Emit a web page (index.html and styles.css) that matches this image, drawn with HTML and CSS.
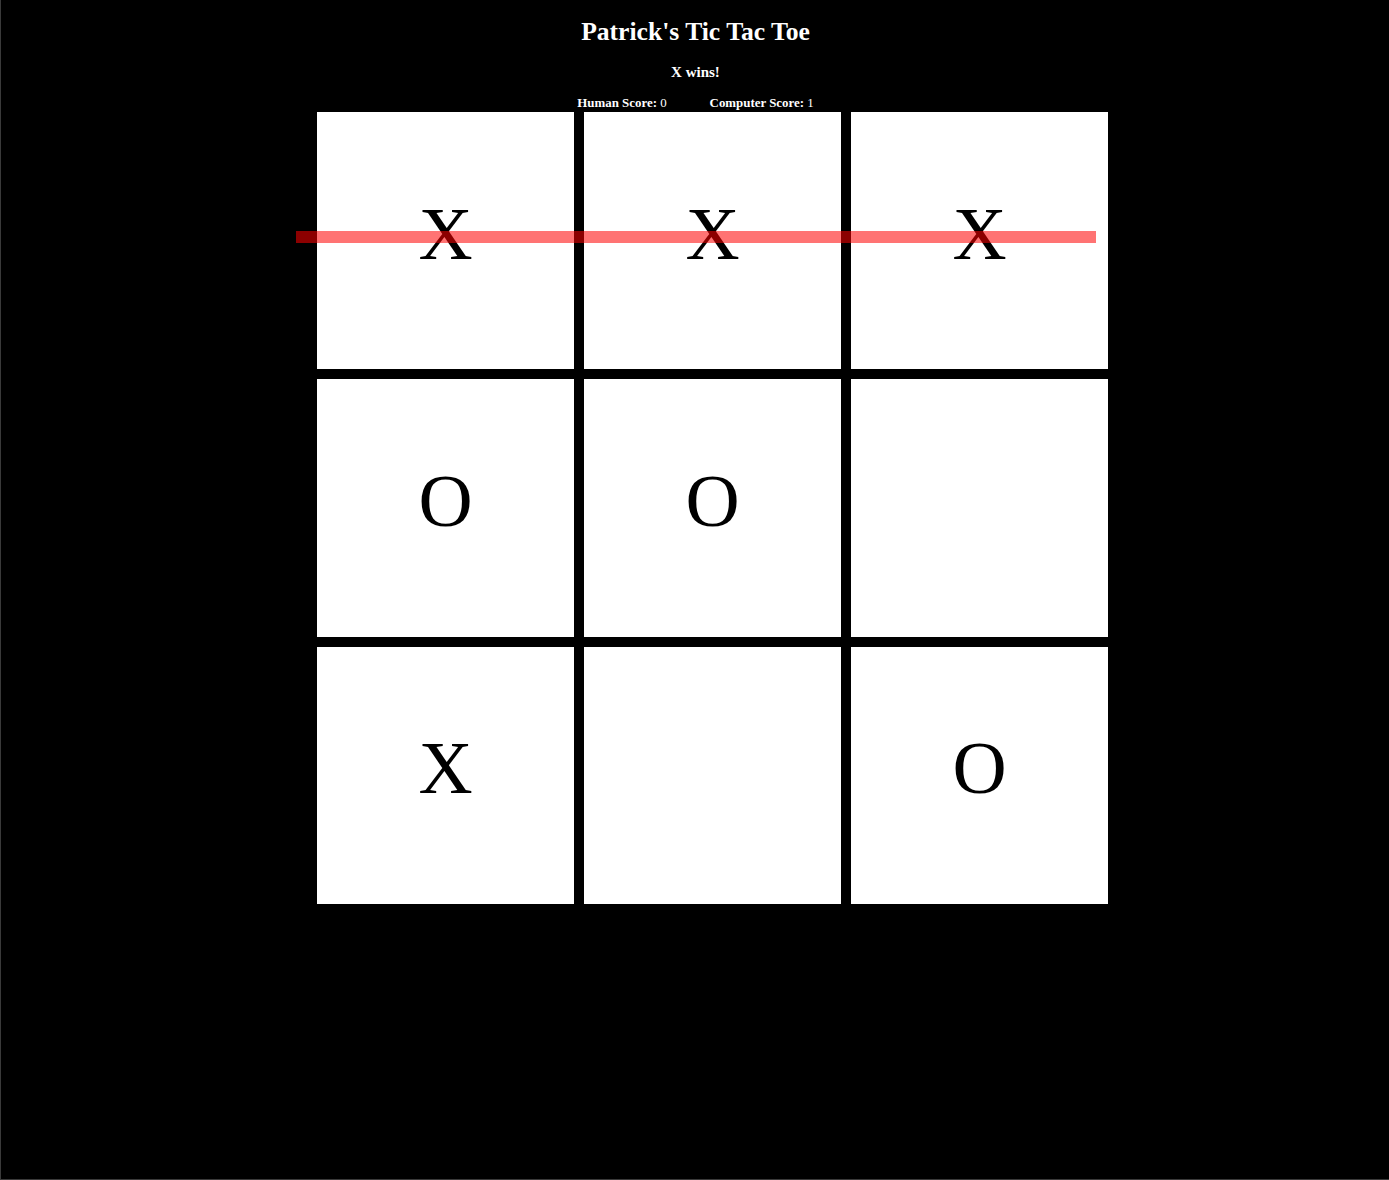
FILE: index.html
```html
<!DOCTYPE html>
<html lang="en">
<head>
<meta charset="utf-8">
<title>Patrick's Tic Tac Toe</title>
<link rel="stylesheet" href="styles.css">
</head>
<body>
<div class="page">
  <header class="header">
    <h1 class="title">Patrick's Tic Tac Toe</h1>
    <p class="status">X wins!</p>
    <div class="scores">
      <span class="score"><b>Human Score:</b> 0</span>
      <span class="score"><b>Computer Score:</b> 1</span>
    </div>
  </header>
  <div class="board">
    <div class="cell">X</div>
    <div class="cell">X</div>
    <div class="cell">X</div>
    <div class="cell">O</div>
    <div class="cell">O</div>
    <div class="cell"></div>
    <div class="cell">X</div>
    <div class="cell"></div>
    <div class="cell">O</div>
    <div class="win-line"></div>
  </div>
</div>
</body>
</html>
```

FILE: styles.css
```css
html, body {
  margin: 0;
  padding: 0;
  background: #000;
}

body {
  font-family: "Liberation Serif", "Times New Roman", serif;
  color: #fff;
  min-height: 100vh;
  box-sizing: border-box;
  border-left: 1px solid #3a3a3a;
  border-bottom: 1px solid #3a3a3a;
}

.page {
  display: flex;
  flex-direction: column;
}

.header {
  display: flex;
  flex-direction: column;
  align-items: center;
  padding-top: 17px;
  padding-left: 1px;
}

.title {
  margin: 0;
  font-size: 25.6px;
  line-height: 30px;
  font-weight: bold;
}

.status {
  margin: 16px 0 0;
  font-size: 15px;
  line-height: 18px;
  font-weight: bold;
}

.scores {
  margin-top: 15px;
  display: flex;
  gap: 43px;
  font-size: 12.9px;
  line-height: 15px;
  color: #fff;
}

.score b {
  font-weight: bold;
}

.board {
  position: relative;
  margin: 1px 0 0 316px;
  display: grid;
  grid-template-columns: repeat(3, 257px);
  grid-template-rows: repeat(3, 257.33px);
  gap: 10px;
  width: max-content;
}

.cell {
  background: #fff;
  color: #000;
  display: flex;
  align-items: center;
  justify-content: center;
  font-size: 75px;
  line-height: 1;
  padding-bottom: 15px;
  box-sizing: border-box;
}

.win-line {
  position: absolute;
  left: -21px;
  top: 119px;
  width: 800px;
  height: 12px;
  background: rgba(255, 0, 0, 0.55);
}
```
